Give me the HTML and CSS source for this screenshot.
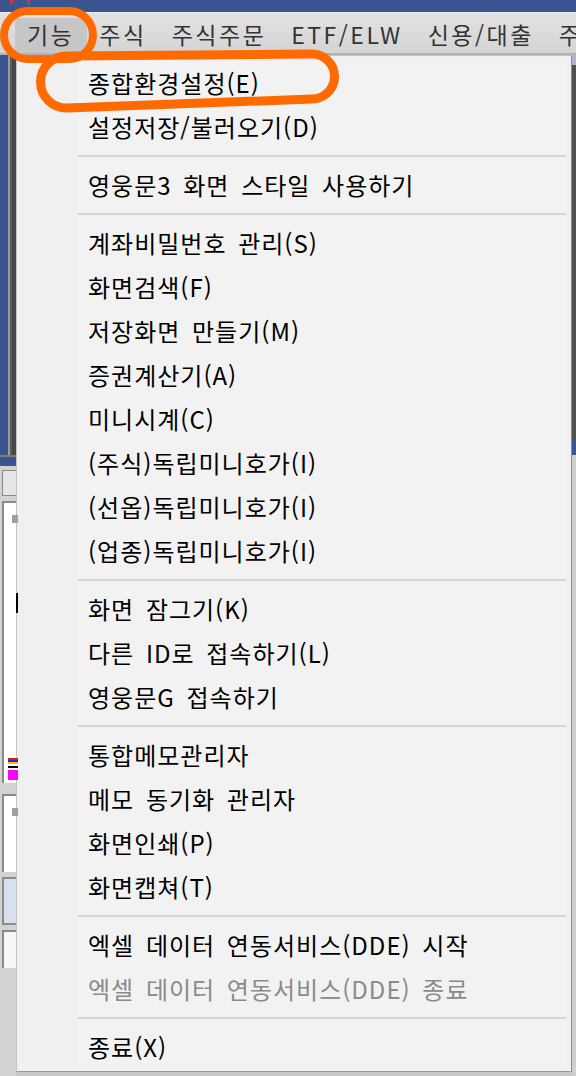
FILE: index.html
```html
<!DOCTYPE html>
<html lang="ko">
<head>
<meta charset="UTF-8">
<title>기능 메뉴</title>
<link rel="stylesheet" href="styles.css">
</head>
<body>
	<div class="titlebar"><span class="appicon"></span></div>

	<div class="menubar">
		<span class="mb-item active">기능</span>
		<span class="mb-item">주식</span>
		<span class="mb-item">주식주문</span>
		<span class="mb-item">ETF/ELW</span>
		<span class="mb-item">신용/대출</span>
		<span class="mb-item">주</span>
	</div>

	<div class="workspace">
		<div class="side-left">
			<div class="l-desk"></div>
			<div class="l-bar"></div>
			<div class="l-panel">
				<div class="l-button"></div>
				<div class="l-white l-white-big">
					<span class="l-square"></span>
					<span class="l-tick"></span>
					<span class="l-marks"></span>
				</div>
				<div class="l-white l-white-small">
					<span class="l-square"></span>
				</div>
				<div class="l-blue"></div>
				<div class="l-white l-white-tiny"></div>
			</div>
		</div>

		<div class="menu">
			<div class="menu-list">
				<div class="item">종합환경설정(E)</div>
				<div class="item">설정저장/불러오기(D)</div>
				<div class="sep"></div>
				<div class="item">영웅문3 화면 스타일 사용하기</div>
				<div class="sep"></div>
				<div class="item">계좌비밀번호 관리(S)</div>
				<div class="item">화면검색(F)</div>
				<div class="item">저장화면 만들기(M)</div>
				<div class="item">증권계산기(A)</div>
				<div class="item">미니시계(C)</div>
				<div class="item">(주식)독립미니호가(I)</div>
				<div class="item">(선옵)독립미니호가(I)</div>
				<div class="item">(업종)독립미니호가(I)</div>
				<div class="sep"></div>
				<div class="item">화면 잠그기(K)</div>
				<div class="item">다른 ID로 접속하기(L)</div>
				<div class="item">영웅문G 접속하기</div>
				<div class="sep"></div>
				<div class="item">통합메모관리자</div>
				<div class="item">메모 동기화 관리자</div>
				<div class="item">화면인쇄(P)</div>
				<div class="item">화면캡쳐(T)</div>
				<div class="sep"></div>
				<div class="item">엑셀 데이터 연동서비스(DDE) 시작</div>
				<div class="item disabled">엑셀 데이터 연동서비스(DDE) 종료</div>
				<div class="sep"></div>
				<div class="item">종료(X)</div>
			</div>
		</div>

		<div class="side-right">
			<div class="r-top"></div>
			<div class="r-dark"></div>
			<div class="r-bar"></div>
			<div class="r-panel"></div>
		</div>
	</div>

	<!-- orange highlight marks drawn over the screenshot -->
	<svg class="marks" width="576" height="130" viewBox="0 0 576 130">
		<rect x="4" y="11" width="89" height="48" rx="24" ry="24" fill="none" stroke="#ff6a00" stroke-width="8"/>
		<path d="M 66 56 L 312 54 A 22.5 22.5 0 0 1 312 99 L 67 108 A 26 26 0 0 1 66 56 Z" fill="none" stroke="#ff6a00" stroke-width="9"/>
	</svg>
</body>
</html>
```

FILE: styles.css
```css
body {
	margin: 0;
	width: 576px;
	height: 1076px;
	overflow: hidden;
	background-color: #c8c8c8;
	font-family: "Noto Sans CJK KR", sans-serif;
	position: relative;
}

.titlebar {
	height: 12px;
	background-color: #3a5590;
}
.appicon {
	display: block;
	margin-left: 10px;
	width: 20px;
	height: 4px;
	background: linear-gradient(to right, #e03030 0 3px, transparent 3px 17px, #e03030 17px 20px);
}

.menubar {
	height: 40px;
	display: flex;
	align-items: flex-end;
	padding-left: 15px;
	overflow: hidden;
	background: linear-gradient(#e2e2e2, #d4d4d4);
	border-top: 1px solid #ececec;
	border-bottom: 2px solid #b2b2b2;
	font-size: 23px;
	color: #333;
	letter-spacing: 2.5px;
}
.mb-item {
	flex-shrink: 0;
	height: 35px;
	line-height: 33px;
	padding: 0 13px 0 12px;
	white-space: nowrap;
}
.mb-item.active {
	background-color: #c6c6c6;
}

.workspace {
	display: flex;
	height: 1021px;
}

/* app windows peeking out on the left */
.side-left {
	width: 16px;
	display: flex;
	flex-direction: column;
}
.l-desk {
	height: 400px;
	background: linear-gradient(to right, #3a5590 0 8px, #9a9a9a 8px 10px, #5a5a5a 10px 12px, #474747 12px 16px);
}
.l-bar {
	height: 9px;
	background-color: #3a5590;
	border-top: 2px solid #7c7c7c;
}
.l-panel {
	flex: 1;
	background-color: #d2d2d2;
	padding-top: 4px;
	display: flex;
	flex-direction: column;
	gap: 5px;
}
.l-button {
	height: 24px;
	margin-left: 2px;
	background-color: #e6e6e6;
	border: 1px solid #8a8a8a;
	border-right: 0;
}
.l-white {
	margin-left: 2px;
	background-color: #fff;
	border-left: 2px solid #8a8a8a;
	border-top: 2px solid #8a8a8a;
	position: relative;
}
.l-white-big {
	height: 280px;
}
.l-white-small {
	height: 76px;
	margin-top: 6px;
}
.l-blue {
	height: 44px;
	margin-left: 2px;
	background-color: #d6e0ee;
	border: 2px solid #8a8a8a;
	border-right: 0;
}
.l-white-tiny {
	height: 36px;
	background-color: #f6f6f6;
}
.l-square {
	position: absolute;
	left: 8px;
	top: 12px;
	width: 6px;
	height: 8px;
	background-color: #a0a0a0;
}
.l-tick {
	position: absolute;
	left: 12px;
	top: 90px;
	width: 2px;
	height: 20px;
	background-color: #000;
}
.l-marks {
	position: absolute;
	left: 4px;
	top: 255px;
	width: 10px;
	height: 22px;
	background: linear-gradient(#f01010 0 2px, #1030e0 2px 4px, #f0c000 4px 6px, #fff 6px 8px, #000 8px 10px, #fff 10px 12px, #ff00ff 12px 22px);
}

/* the dropdown */
.menu {
	width: 556px;
	height: 1017px;
	box-sizing: border-box;
	background-color: #f0f0f0;
	border: 1px solid #c4c4c4;
	border-right-color: #8e8e8e;
	border-bottom-color: #9a9a9a;
	padding: 5px 5px 2px 61px;
}
.menu-list {
	background-color: #f2f2f2;
}
.item {
	height: 44px;
	line-height: 44px;
	padding-left: 10px;
	font-size: 24px;
	color: #000;
	letter-spacing: 1px;
	word-spacing: 4px;
	white-space: nowrap;
}
.item.disabled {
	color: #8a8a8a;
}
.sep {
	height: 2px;
	margin: 6px 0;
	background-color: #d6d6d6;
}

/* right edge of the app behind */
.side-right {
	width: 4px;
	display: flex;
	flex-direction: column;
}
.r-top {
	height: 10px;
	background-color: #a9b6d0;
}
.r-dark {
	height: 375px;
	background-color: #4f4f4f;
}
.r-bar {
	height: 15px;
	background-color: #3a5590;
}
.r-panel {
	flex: 1;
	background-color: #cfcfcf;
}

.marks {
	position: absolute;
	left: 0;
	top: 0;
}
```
